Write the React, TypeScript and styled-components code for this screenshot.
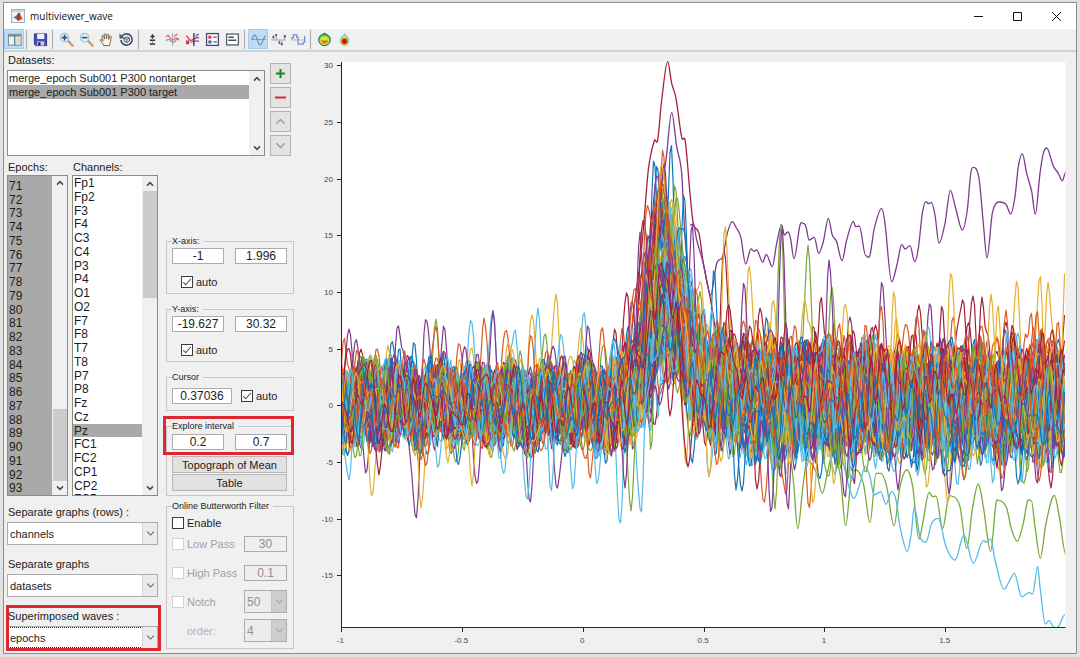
import React from "react";
import styled, { createGlobalStyle, css } from "styled-components";

const GlobalStyle = createGlobalStyle`
  *, *::before, *::after { box-sizing: border-box; }
  body {
    margin: 0;
    background: #e2e2e2;
    color: #1c1c1c;
    font: 11px/14px "Liberation Sans", Arial, sans-serif;
  }
  #root { display: flow-root; }
  button, input, select { font: inherit; color: inherit; margin: 0; }
`;

/* ---------- window chrome ---------- */

const Window = styled.div`
  display: flex;
  flex-direction: column;
  margin: 2px 3px 3px;
  min-height: calc(100vh - 5px);
  border: 1px solid #8c8c8c;
  background: #f0f0f0;
`;

const TitleBar = styled.header`
  display: flex;
  align-items: center;
  height: 26px;
  padding-left: 7px;
  background: #fff;
`;

const Title = styled.h1`
  flex: 1;
  margin: 0 0 0 5px;
  font: 400 10px/16px "Open Sans", "Noto Sans", sans-serif;
  color: #111;
`;

const WindowButton = styled.button`
  display: grid;
  place-items: center;
  width: 39px;
  height: 24px;
  padding: 0;
  border: 0;
  background: none;
`;

const Toolbar = styled.div`
  display: flex;
  align-items: center;
  height: 23px;
  padding-bottom: 1px;
  border-bottom: 2px solid #d2d2d2;
`;

const ToolButton = styled.button<{ $on?: boolean }>`
  display: grid;
  place-items: center;
  width: 20px;
  height: 20px;
  padding: 0;
  border: 1px solid ${(p) => (p.$on ? "#a5cdec" : "transparent")};
  background: ${(p) => (p.$on ? "#bfdcf2" : "none")};
`;

const Separator = styled.span`
  width: 1px;
  height: 19px;
  margin: 0 3px 0 2px;
  background: #a8a8a8;
`;

const Body = styled.main`
  flex: 1;
  display: flex;
  align-items: flex-start;
`;

/* ---------- side panel ---------- */

const Sidebar = styled.aside`
  flex: none;
  width: 296px;
  padding: 0 6px 4px 3px;
`;

const DatasetArea = styled.section`
  display: grid;
  grid-template-columns: 258px 21px;
  column-gap: 5px;
  align-items: end;
`;

const Stack = styled.div<{ $gap?: number }>`
  display: flex;
  flex-direction: column;
  gap: ${(p) => p.$gap ?? 0}px;
`;

const Caption = styled.span`
  padding-left: 1px;
  line-height: 16px;
`;

const SquareButton = styled.button`
  display: grid;
  place-items: center;
  width: 21px;
  height: 21px;
  padding: 0;
  border: 1px solid #b4b4b4;
  background: #e3e3e3;
`;

const Controls = styled.section`
  display: grid;
  grid-template-columns: 151px 128px;
  column-gap: 8px;
  align-items: end;
  margin-top: 3px;
`;

const ListRow = styled.div`
  display: grid;
  grid-template-columns: 61px 86px;
  gap: 0 4px;
`;

const ListFrame = styled.div<{ $height: number; $end?: boolean }>`
  display: grid;
  grid-template: 100% / 1fr 15px;
  align-items: ${(p) => (p.$end ? "end" : "start")};
  height: ${(p) => p.$height}px;
  overflow: hidden;
  border: 1px solid #8b8b8b;
  background: #fff;
`;

const List = styled.ul<{ $height: number; $large?: boolean }>`
  display: grid;
  grid-auto-rows: 1fr;
  height: ${(p) => p.$height}px;
  margin: 0;
  padding: 0;
  list-style: none;
  font-size: ${(p) => (p.$large ? 12 : 11)}px;
`;

const Item = styled.li<{ $selected?: boolean }>`
  min-height: 0;
  padding-left: 1px;
  white-space: nowrap;
  background: ${(p) => (p.$selected ? "#a9a9a9" : "none")};
`;

const ScrollTrack = styled.div`
  display: flex;
  flex-direction: column;
  align-self: stretch;
  align-items: center;
  background: #f0f0f0;
`;

const ScrollSpace = styled.div<{ $size?: number; $thumb?: boolean }>`
  width: 14px;
  flex: ${(p) => (p.$size ? `0 0 ${p.$size}px` : "1")};
  background: ${(p) => (p.$thumb ? "#cbcbcb" : "none")};
`;

const ArrowBox = styled.span`
  display: grid;
  place-items: center;
  height: 15px;
`;

const Fields = styled.div`
  display: grid;
  gap: 12px;
  margin-top: 9px;
`;

const Field = styled.label`
  position: relative;
  display: block;
`;

const FieldLabel = styled.span`
  display: block;
  width: 128px;
  height: 17px;
  overflow: hidden;
  padding-left: 1px;
  line-height: 14px;
`;

const SelectShell = styled.span<{ $dim?: boolean }>`
  display: grid;
  grid-template-columns: 1fr 15px;
  height: 23px;
  border: 1px solid #adadad;
  background: ${(p) => (p.$dim ? "#ececec" : "#fff")};
  color: ${(p) => (p.$dim ? "#929292" : "inherit")};
  font-size: ${(p) => (p.$dim ? 12 : 11)}px;
`;

const SelectBox = styled.select<{ $focus?: boolean }>`
  grid-area: 1 / 1 / 2 / 3;
  appearance: none;
  min-width: 0;
  margin-right: 14px;
  padding: 0 0 0 1px;
  border: 1px dotted ${(p) => (p.$focus ? "#222" : "transparent")};
  background: none;
  outline: 0;
  opacity: 1;
`;

const SelectArrow = styled.span<{ $dim?: boolean }>`
  grid-area: 1 / 2;
  display: grid;
  place-items: center;
  pointer-events: none;
  border-left: 1px solid ${(p) => (p.$dim ? "#c4c4c4" : "#d4d4d4")};
  background: ${(p) => (p.$dim ? "#cdcdcd" : "#ebebeb")};
`;

const highlightPlaces = {
  field: css`inset: -4px -3px -2px -1px;`,
  group: css`top: -4px; left: -3px; right: 0; height: 39px;`,
};

const Highlight = styled.span<{ $place: keyof typeof highlightPlaces }>`
  position: absolute;
  border: 3px solid #de2730;
  pointer-events: none;
  ${(p) => highlightPlaces[p.$place]}
`;

const Group = styled.fieldset<{ $top: number; $bottom: number }>`
  min-width: 0;
  margin: 0;
  padding: ${(p) => p.$top}px 6px ${(p) => p.$bottom}px 5px;
  border: 1px solid #c6c6c6;
`;

const Legend = styled.legend`
  padding: 0 4px 0 0;
  font-size: 9px;
  line-height: 12px;
`;

const Spread = styled.div<{ $packed?: boolean }>`
  display: flex;
  justify-content: ${(p) => (p.$packed ? "flex-start" : "space-between")};
  align-items: center;
`;

const TextBox = styled.input<{ $width: number }>`
  width: ${(p) => p.$width}px;
  height: 16px;
  padding: 0;
  border: 1px solid #ababab;
  background: #fff;
  font-size: 12px;
  text-align: center;
  &:disabled {
    background: #efefef;
    color: #8e8e8e;
  }
`;

const CheckLabel = styled.label<{ $dim?: boolean; $indent?: number }>`
  display: flex;
  align-items: center;
  gap: 3px;
  height: 12px;
  padding-left: ${(p) => p.$indent ?? 0}px;
  color: ${(p) => (p.$dim ? "#a2a2a2" : "inherit")};
  white-space: nowrap;
`;

const Check = styled.input`
  appearance: none;
  display: grid;
  place-items: center;
  width: 12px;
  height: 12px;
  border: 1px solid #3c3c3c;
  background: #fff;
  &:checked::after {
    content: "";
    width: 4px;
    height: 8px;
    margin-bottom: 2px;
    border: solid #444;
    border-width: 0 1px 1px 0;
    transform: rotate(42deg);
  }
  &:disabled { border-color: #d2d2d2; }
`;

const Relative = styled.div`
  position: relative;
`;

const ButtonStack = styled.div`
  display: grid;
  gap: 1px;
  margin-top: 6px;
`;

const PanelButton = styled.button`
  height: 17px;
  padding: 0;
  border: 1px solid #b6b6b6;
  background: #e2e2e2;
  line-height: 14px;
  white-space: nowrap;
`;

const FilterRow = styled.div`
  display: grid;
  grid-template-columns: 1fr 43px;
  align-items: center;
  height: 29px;
`;

const OrderLabel = styled.label`
  padding-left: 15px;
  color: #b0b0b0;
`;

const PlotArea = styled.section`
  flex: 1;
  min-width: 0;
`;

const PlotSvg = styled.svg`
  display: block;
  width: 100%;
  height: auto;
`;

const TickText = styled.text`
  font: 8px "Liberation Sans", Arial, sans-serif;
  fill: #484848;
`;

/* ---------- small drawings ---------- */

const Chevron = ({ up, color = "#4a4a4a", size = 8 }: { up?: boolean; color?: string; size?: number }) => (
  <svg width={size} height={size} viewBox="0 0 8 8" fill="none" stroke={color} strokeWidth={size > 8 ? 1 : 1.5}>
    <path d={up ? "M1 5.600 4 2.600 7 5.600" : "M1 2.400 4 5.400 7 2.400"} />
  </svg>
);

const Icon = ({ children }: { children: React.ReactNode }) => (
  <svg width="15" height="15" viewBox="0 0 16 16" fill="none">{children}</svg>
);

const MatlabIcon = () => (
  <svg width="14" height="14" viewBox="0 0 14 14">
    <rect x=".5" y=".5" width="13" height="13" fill="#eef3f8" stroke="#9fb0c2" />
    <path d="M1 1h12v2H1z" fill="#c6d6e6" />
    <path d="M2 8.300 5 7l2-3 1.200 1L6 10.400 4.400 9.600z" fill="#3d7cab" />
    <path d="M5 9.800C6.400 8.400 7 4 8.100 3.200c1.200.6 2 5 4 7.400-1.400-.6-2.400-.4-3.200.4L7.600 12 5 9.800z" fill="#c8421f" />
    <path d="M8.100 3.200c-.4 2-.4 5-.5 8.600L6 10.600C7 8 7.200 4.200 8.100 3.200z" fill="#8a2417" />
  </svg>
);

const icons = {
  panels: (
    <Icon>
      <rect x="1.500" y="2.500" width="13.500" height="11.500" fill="#f5f3ea" stroke="#6a8293" />
      <path d="M2 3h12.500v2H2z" fill="#7c95a8" />
      <path d="M8.200 3v11" stroke="#6a8293" strokeWidth="1.600" />
      <path d="M9.500 6h4.500v7H9.500z" fill="#dedbcd" />
    </Icon>
  ),
  save: (
    <Icon>
      <path d="M1.500 2h13v12.500H3L1.500 13z" fill="#4a4cc0" stroke="#2d2e8e" />
      <path d="M4.500 2h7.500v5.500H4.500z" fill="#f4f6ff" />
      <path d="M4.500 10h7.500v4.500H4.500z" fill="#c9cde2" />
      <path d="M5.500 11h2.500v3.500H5.500z" fill="#22246e" />
    </Icon>
  ),
  zoomIn: (
    <Icon>
      <path d="m9.500 9.500 5 5" stroke="#cf9c6d" strokeWidth="2.500" strokeLinecap="round" />
      <circle cx="6" cy="6" r="4.500" fill="#dff1fb" stroke="#a3c2d8" strokeWidth="1.200" />
      <path d="M3 6h6M6 3v6" stroke="#2a5287" strokeWidth="1.700" />
    </Icon>
  ),
  zoomOut: (
    <Icon>
      <path d="m9.500 9.500 5 5" stroke="#cf9c6d" strokeWidth="2.500" strokeLinecap="round" />
      <circle cx="6" cy="6" r="4.500" fill="#dff1fb" stroke="#a3c2d8" strokeWidth="1.200" />
      <path d="M3 6h6" stroke="#2a5287" strokeWidth="1.700" />
    </Icon>
  ),
  hand: (
    <Icon>
      <path
        d="M5 14.500C4.200 12 1.800 10 1.300 8.300c.9-.8 1.900.1 3 1.500L3 4.300c.6-1 1.500-.7 1.900.3l1 3-.4-5.200c.6-1 1.600-.8 1.900.2l.6 4.700.8-4.500c.7-.8 1.600-.4 1.700.5l-.3 4.600 1.500-3.200c.8-.6 1.600 0 1.400.9-.8 3-.7 5.700-2 8.900z"
        fill="#fff4e2" stroke="#6d5d50"
      />
    </Icon>
  ),
  rotate: (
    <Icon>
      <path d="M3 4.700A6 6 0 1 1 2 8.500" stroke="#46536e" strokeWidth="1.800" />
      <path d="M.5 1.500v5.500H6z" fill="#46536e" />
      <path d="m5.500 6.500 3-1.300 2.500 1.300v3.200l-2.700 1.500-2.800-1.500zM5.500 6.500l2.800 1.300L11 6.500M8.300 7.800v3.400" stroke="#46536e" />
    </Icon>
  ),
  adjust: (
    <Icon>
      <path d="M8 2.500v4.500M5.800 4.800h4.400M5.200 8.800h5.600M5.200 12.800h5.600" stroke="#2f2f2f" strokeWidth="1.500" />
      <path d="M8 9v3.500" stroke="#888" />
    </Icon>
  ),
  cursorWave: (
    <Icon>
      <path d="M1 5.500c2-3 3-2 4.500 1S8 9 10 7.500s3-1 5 0" stroke="#e27482" strokeWidth="1.500" />
      <path d="M1 9.500c2-2 3-2 5 0s4 2 5 0 2-2 4-1" stroke="#7f8bd6" strokeWidth="1.300" />
      <path d="M8 1v14" stroke="#a2a2ad" />
      <path d="m9.500 5 4-3" stroke="#e27482" strokeWidth="1.400" />
    </Icon>
  ),
  markWave: (
    <Icon>
      <path d="M1 5c2-2 3 4 5 4s5-4 9-3" stroke="#dc4358" strokeWidth="1.500" />
      <path d="M6 11c2 0 4-3 9-1" stroke="#5766c8" strokeWidth="1.300" />
      <path d="M9.500 1v14" stroke="#443a50" strokeWidth="1.500" />
      <path d="M1 9h3.500v4H1z" fill="#d8344c" />
      <path d="m11.500 4.500 3-2.500" stroke="#5766c8" strokeWidth="1.500" />
    </Icon>
  ),
  legend: (
    <Icon>
      <rect x="1.700" y="1.700" width="12.600" height="12.600" fill="#fff" stroke="#454b68" strokeWidth="1.400" />
      <path d="M3.500 4H7v3.200H3.500z" fill="#d64659" />
      <path d="M3.500 9H7v3.200H3.500z" fill="#4b61c4" />
      <path d="M9 5.500h3.500M9 10.600h3.500" stroke="#454b68" strokeWidth="1.300" />
    </Icon>
  ),
  title: (
    <Icon>
      <rect x="1.700" y="2.200" width="12.600" height="11.600" fill="#fff" stroke="#59616e" strokeWidth="1.400" />
      <path d="M3.500 5.500h6M3.500 8.800h8.500" stroke="#48505e" strokeWidth="1.600" />
    </Icon>
  ),
  line: (
    <Icon>
      <path d="M0 8h16" stroke="#8f989c" />
      <path d="M1 9C2.500 3 4.200 1.500 6 6l2 5.500c1.400 3.500 3 2 4-1L15 4" stroke="#6f8bca" strokeWidth="1.300" />
    </Icon>
  ),
  stem: (
    <Icon>
      <path d="M0 8.500h16" stroke="#a0a2b0" />
      <path d="M2.500 8V5M5.500 8V3M9 9v3M11.500 9v4M14.500 8V5" stroke="#8387a5" />
      <path d="M1.500 5h2M4.500 3h2M8 11.500h2M10.500 13h2M13.500 4.500H16" stroke="#47518f" strokeWidth="2" />
    </Icon>
  ),
  stairs: (
    <Icon>
      <path d="M0 8.500h16" stroke="#b0b0b8" />
      <path d="M1 8V6h1.500V3H6v2.500h1.500V13H13v-2h1.500V4" stroke="#7d89d4" strokeWidth="1.300" />
    </Icon>
  ),
  topoAll: (
    <Icon>
      <path d="m6.500 2.500 1.500-2 1.500 2z" fill="#333" />
      <circle cx="8" cy="8.300" r="6.300" fill="#3cc45e" stroke="#1f6d4a" />
      <ellipse cx="8" cy="9" rx="5.200" ry="4.600" fill="#d7ea3b" />
      <path d="M3.800 8.600C5.500 7 6.500 9 8 9s2.700-2 4.200-.4c.1 2.700-1.800 4.200-4.200 4.200S3.800 11 3.800 8.600z" fill="#fb9429" />
      <path d="M5.500 9.600h5L8 11.600z" fill="#ee4422" />
    </Icon>
  ),
  topoOne: (
    <Icon>
      <path d="M8 1c1 2 5 4.300 5 8.500a5 5.300 0 0 1-10 0C3 6 6.500 4 8 1z" fill="#58d0cc" />
      <path d="M8 3c1 1.600 4.200 3.800 4.200 6.800a4.200 4.200 0 0 1-8.400 0C3.800 7 7 5 8 3z" fill="#e9e43a" />
      <circle cx="8" cy="9.800" r="3.400" fill="#f26a24" />
      <circle cx="8" cy="10" r="2.500" fill="#c41410" />
    </Icon>
  ),
};

type ToolEntry = { icon: keyof typeof icons; label: string; on?: boolean };

const toolGroups: ToolEntry[][] = [
  [{ icon: "panels", label: "Toggle panel", on: true }],
  [{ icon: "save", label: "Save" }],
  [
    { icon: "zoomIn", label: "Zoom in" },
    { icon: "zoomOut", label: "Zoom out" },
    { icon: "hand", label: "Pan" },
    { icon: "rotate", label: "Rotate" },
  ],
  [
    { icon: "adjust", label: "Polarity" },
    { icon: "cursorWave", label: "Cursor" },
    { icon: "markWave", label: "Interval" },
    { icon: "legend", label: "Legend" },
    { icon: "title", label: "Title" },
  ],
  [
    { icon: "line", label: "Line", on: true },
    { icon: "stem", label: "Stem" },
    { icon: "stairs", label: "Stairs" },
  ],
  [
    { icon: "topoAll", label: "Topography" },
    { icon: "topoOne", label: "Headplot" },
  ],
];

/* ---------- plot ---------- */

const BLUE = 0, ORANGE = 1, YELLOW = 2, PURPLE = 3, GREEN = 4, SKY = 5, RED = 6;
const palette = ["#1274bb", "#d95a22", "#e8b02e", "#7f3a90", "#78aa38", "#55bce8", "#a4203a"];

const X0 = 341.5;
const X1 = 1065.5;
const toX = (t: number) => 583.2 + t * 241.7;
const toY = (v: number) => 405.3 - v * 11.33;

// Single deflections that leave the common band: x, y of the tip, colour.
const peaks: [number, number, number][] = [
  [344, 337, ORANGE], [349, 329, PURPLE], [356, 339, PURPLE], [388, 345, YELLOW], [392, 341, BLUE],
  [398, 325, PURPLE], [414, 342, BLUE], [426, 319, PURPLE], [436, 319, GREEN], [436, 326, ORANGE],
  [444, 325, PURPLE], [459, 343, ORANGE], [471, 320, SKY], [484, 318, ORANGE], [493, 310, SKY],
  [493, 311, PURPLE], [506, 330, ORANGE], [515, 329, SKY], [532, 315, YELLOW], [538, 308, SKY],
  [531, 335, ORANGE], [545, 333, GREEN], [556, 294, YELLOW], [561, 334, SKY], [581, 326, YELLOW],
  [584, 312, SKY], [588, 325, PURPLE], [602, 327, ORANGE], [615, 328, RED], [627, 292, RED],
  [640, 232, PURPLE], [654, 159, BLUE], [663, 148, ORANGE], [671, 143, BLUE], [657, 165, BLUE],
  [664, 164, PURPLE], [684, 193, BLUE], [675, 184, GREEN], [692, 223, PURPLE], [725, 225, YELLOW],
  [724, 249, RED], [714, 269, BLUE], [749, 265, YELLOW], [744, 282, PURPLE], [760, 308, RED],
  [773, 300, YELLOW], [781, 224, GREEN], [782, 227, PURPLE], [808, 245, GREEN], [805, 299, YELLOW],
  [821, 296, RED], [829, 260, PURPLE], [832, 287, GREEN], [845, 304, YELLOW], [850, 317, PURPLE],
  [882, 281, PURPLE], [894, 290, YELLOW], [919, 305, RED], [930, 303, PURPLE], [942, 305, RED],
  [951, 272, YELLOW], [963, 299, RED], [973, 296, RED], [982, 297, RED], [991, 294, YELLOW],
  [998, 304, YELLOW], [1006, 310, ORANGE], [1017, 280, YELLOW], [1031, 312, ORANGE], [1040, 275, YELLOW],
  [1048, 282, YELLOW], [1037, 310, ORANGE], [1066, 258, YELLOW],
  [349, 480, SKY], [366, 474, PURPLE], [372, 497, YELLOW], [379, 475, RED], [416, 519, PURPLE],
  [421, 508, YELLOW], [426, 466, ORANGE], [438, 468, SKY], [448, 463, YELLOW], [458, 465, BLUE],
  [472, 486, YELLOW], [477, 484, PURPLE], [504, 474, SKY], [527, 500, SKY], [530, 503, PURPLE],
  [551, 492, SKY], [557, 489, PURPLE], [573, 490, SKY], [590, 479, ORANGE], [597, 485, SKY],
  [620, 524, SKY], [625, 488, PURPLE], [631, 511, GREEN], [641, 514, SKY], [651, 452, GREEN],
  [670, 416, RED], [658, 418, SKY], [686, 467, YELLOW], [688, 467, RED], [692, 464, BLUE],
  [709, 477, YELLOW], [709, 476, SKY], [736, 490, BLUE], [742, 491, BLUE], [757, 489, RED],
  [764, 503, ORANGE], [771, 513, PURPLE], [775, 509, GREEN], [788, 511, PURPLE], [786, 495, ORANGE],
  [809, 509, ORANGE], [813, 504, YELLOW], [845, 498, PURPLE], [834, 485, YELLOW], [854, 485, RED],
  [898, 490, PURPLE], [927, 488, YELLOW], [949, 494, PURPLE], [948, 505, YELLOW], [993, 484, SKY],
  [1002, 492, PURPLE], [1018, 484, BLUE], [1037, 484, PURPLE], [1051, 488, RED],
];

function makeRandom(seed: number) {
  let s = seed;
  return () => {
    s = (s + 0x6d2b79f5) | 0;
    let t = Math.imul(s ^ (s >>> 15), 1 | s);
    t = (t + Math.imul(t ^ (t >>> 7), 61 | t)) ^ t;
    return ((t ^ (t >>> 14)) >>> 0) / 4294967296;
  };
}

const EPOCHS = 93;

// Offset of the late part of an epoch, in microvolts, by colour.
const lateShift = [-0.5, 0.8, 0.1, 0, -0.2, -0.3, 1.1];

function makeTraces() {
  const rand = makeRandom(41);
  const used = palette.map(() => 0);
  const spikes: [number, number][][] = Array.from({ length: EPOCHS }, () => []);
  for (const [x, y, c] of peaks) {
    const k = used[c]++ % 13;
    spikes[c + 7 * k].push([x, y]);
  }
  return Array.from({ length: EPOCHS }, (_, i) => {
    const waves = [80, 46, 31, 23, 18, 14, 11, 8].map((p, n) => ({
      w: (2 * Math.PI) / (p * (0.8 + rand() * 0.4)),
      a: [0.6, 0.7, 0.8, 0.85, 0.85, 0.75, 0.6, 0.35][n] * (0.4 + rand() * 1.1),
      ph: rand() * Math.PI * 2,
      m: rand() * 6,
      q: 12 + rand() * 25,
    }));
    const amp = 5 + rand() * 13.5;
    const mid = 666 + (rand() - 0.5) * 22;
    const rise = 18 + rand() * 9;
    const fall = 20 + rand() * 10;
    const late = (rand() - 0.5) * 2.4 + lateShift[i % 7];
    const pts: string[] = [];
    for (let x = X0; x <= X1; x += 1.5) {
      let n = 0;
      for (const k of waves) n += k.a * Math.sin(k.w * x + k.ph) * (1 + 0.7 * Math.sin(x / k.q + k.m));
      n += 0.7 * Math.sin(((x - 430) / 36) * Math.PI * 2) * (x < 600 ? 1 : 0.3);
      const limit = x < 600 ? 6.5 : 9;
      const gain = x < 600 ? 1.15 : Math.min(1.5, 1.15 + (x - 600) / 300);
      const edge = x < mid ? rise : fall;
      let v = limit * Math.tanh((n * gain) / limit) + 0.1;
      v += amp * Math.exp(-(((x - mid) / edge) ** 2));
      if (x > 690) v += (late + 1.6 * Math.exp(-(x - 690) / 80)) * Math.min(1, (x - 690) / 30);
      let y = toY(v);
      for (const [sx, sy] of spikes[i]) {
        const d = Math.abs(x - sx);
        if (d < 14) {
          const f = Math.exp(-((d / 4.4) ** 2));
          y = y * (1 - f) + sy * f;
        }
      }
      pts.push(`${x.toFixed(1)} ${y.toFixed(1)}`);
    }
    return { d: "M" + pts.join("L"), color: palette[i % 7] };
  });
}

// Smooth curve through points given on a grid of thirds of a unit.
function smooth(ox: number, oy: number, raw: number[]) {
  const p: [number, number][] = [];
  for (let i = 0; i < raw.length; i += 2) p.push([ox + raw[i] / 3, oy + raw[i + 1] / 3]);
  let d = `M${p[0][0].toFixed(1)} ${p[0][1].toFixed(1)}`;
  for (let i = 0; i < p.length - 1; i++) {
    const a = p[Math.max(0, i - 1)], b = p[i], c = p[i + 1], e = p[Math.min(p.length - 1, i + 2)];
    const slope = (l: number[], m: number[], r: number[]) =>
      (m[1] - l[1]) * (r[1] - m[1]) <= 0 ? 0 : (r[1] - l[1]) / (r[0] - l[0]);
    const h = (c[0] - b[0]) / 3;
    const y1 = b[1] + slope(a, b, c) * h;
    const y2 = c[1] - slope(b, c, e) * h;
    d += `C${(b[0] + h).toFixed(1)} ${y1.toFixed(1)} ${(c[0] - h).toFixed(1)} ${y2.toFixed(1)} ${c[0].toFixed(1)} ${c[1].toFixed(1)}`;
  }
  return d;
}

const soloTraces = [
  {
    color: palette[RED],
    d: smooth(310, 50, [950, 960, 975, 750, 990, 640, 1000, 540, 1015, 360, 1033, 272, 1043, 270, 1055, 150, 1073, 35, 1085, 100, 1098, 145, 1115, 262, 1126, 275, 1140, 430, 1150, 520, 1167, 550, 1180, 640, 1200, 740, 1215, 830, 1230, 940]),
  },
  {
    color: palette[PURPLE],
    d: smooth(310, 50, [1030, 560, 1050, 430, 1068, 330, 1085, 187, 1100, 290, 1115, 370, 1125, 560, 1140, 700]),
  },
  {
    color: palette[PURPLE],
    d: smooth(690, 50, [0, 525, 10, 522, 20, 570, 40, 640, 62, 735, 80, 640, 98, 620, 112, 550, 127, 515, 137, 530, 152, 560, 167, 642, 183, 597, 192, 604, 200, 600, 218, 637, 229, 613, 247, 650, 260, 580, 275, 525, 283, 555, 293, 546, 301, 562, 312, 626, 330, 525, 340, 520, 348, 530, 357, 570, 373, 562, 386, 610, 400, 575, 415, 505, 427, 555, 440, 575, 456, 632, 470, 570, 490, 514, 497, 530, 508, 528, 527, 617, 540, 615, 553, 535, 575, 475, 585, 520, 605, 695, 622, 640, 635, 583, 645, 597, 660, 587, 674, 635, 685, 595, 697, 490, 708, 455, 716, 461, 724, 457, 735, 495, 747, 580, 765, 520, 781, 421, 797, 475, 817, 540, 832, 480, 842, 370, 850, 352, 867, 385, 880, 520, 891, 624, 907, 490, 926, 456, 948, 463, 962, 492, 975, 440, 985, 350, 997, 311, 1010, 370, 1025, 425, 1036, 493, 1050, 370, 1060, 310, 1070, 294, 1090, 348, 1105, 370, 1117, 392, 1127, 367]),
  },
  {
    color: palette[GREEN],
    d: smooth(690, 340, [295, 330, 310, 420, 323, 566, 340, 430, 352, 360, 380, 400, 397, 460, 412, 400, 425, 350, 450, 400, 467, 557, 483, 420, 497, 390, 520, 430, 540, 548, 558, 400, 573, 400, 590, 440, 612, 557, 630, 440, 650, 390, 668, 440, 687, 598, 700, 540, 717, 457, 728, 470, 738, 468, 758, 565, 775, 475, 787, 469, 810, 500, 830, 625, 848, 500, 865, 432, 880, 500, 902, 634, 918, 490, 928, 482, 950, 505, 965, 570, 982, 604, 1000, 550, 1012, 485, 1024, 482, 1035, 560, 1051, 655, 1068, 550, 1093, 466, 1108, 530, 1127, 642]),
  },
  {
    color: palette[SKY],
    d: smooth(690, 340, [445, 300, 462, 380, 492, 475, 510, 430, 525, 380, 540, 410, 552, 465, 572, 455, 588, 493, 605, 455, 618, 480, 630, 560, 652, 634, 664, 580, 673, 500, 690, 590, 708, 606, 725, 550, 745, 535, 768, 620, 795, 660, 822, 585, 850, 670, 880, 602, 888, 606, 902, 597, 915, 660, 942, 748, 960, 720, 973, 700, 995, 770, 1018, 758, 1028, 762, 1043, 679, 1050, 740, 1066, 852, 1077, 842, 1092, 862, 1105, 860, 1125, 824]),
  },
];

const traces = makeTraces();
const yTicks = [30, 25, 20, 15, 10, 5, 0, -5, -10, -15];
const xTicks = [-1, -0.5, 0, 0.5, 1, 1.5];

const Plot = () => (
  <PlotSvg viewBox="300 52 776 600" role="img" aria-label="Superimposed epochs">
    <clipPath id="axes-clip">
      <rect x={X0} y="61" width={X1 - X0} height="567" />
    </clipPath>
    <rect x={X0} y="62" width={X1 - X0} height="565" fill="#fff" />
    <g clipPath="url(#axes-clip)" fill="none" strokeWidth="1.2" strokeLinejoin="round">
      {soloTraces.map((t, i) => <path key={`s${i}`} d={t.d} stroke={t.color} strokeWidth="1.3" />)}
      {traces.map((t, i) => <path key={i} d={t.d} stroke={t.color} />)}
    </g>
    <path d={`M341.5 62V627.500H${X1}`} fill="none" stroke="#262626" />
    {yTicks.map((v) => (
      <g key={v}>
        <path d={`M337 ${Math.round(toY(v)) + 0.5}h4`} stroke="#262626" />
        <TickText x="333" y={toY(v) + 3} textAnchor="end">{v}</TickText>
      </g>
    ))}
    {xTicks.map((t) => (
      <g key={t}>
        <path d={`M${Math.floor(toX(t)) + 0.5} 627v5`} stroke="#262626" />
        <TickText x={toX(t) - 1} y="643" textAnchor="middle">{t}</TickText>
      </g>
    ))}
  </PlotSvg>
);

/* ---------- reusable controls ---------- */

const Scrollbar = ({ before, thumb }: { before?: number; thumb?: number }) => (
  <ScrollTrack>
    <ArrowBox><Chevron up /></ArrowBox>
    {before ? <ScrollSpace $size={before} /> : null}
    {thumb ? <ScrollSpace $size={thumb} $thumb /> : null}
    <ScrollSpace />
    <ArrowBox><Chevron /></ArrowBox>
  </ScrollTrack>
);

type DropProps = { value: string; dim?: boolean; focus?: boolean; id?: string; label?: string };

const DropDown = ({ value, dim, focus, id, label }: DropProps) => (
  <SelectShell $dim={dim}>
    <SelectBox id={id} aria-label={label} defaultValue={value} disabled={dim} $focus={focus}>
      <option>{value}</option>
    </SelectBox>
    <SelectArrow $dim={dim}><Chevron color={dim ? "#a6a6a6" : "#6a6a6a"} size={9} /></SelectArrow>
  </SelectShell>
);

type TickProps = { text: string; checked?: boolean; dim?: boolean; indent?: number };

const TickBox = ({ text, checked, dim, indent }: TickProps) => (
  <CheckLabel $dim={dim} $indent={indent}>
    <Check type="checkbox" defaultChecked={checked} disabled={dim} />
    {text}
  </CheckLabel>
);

const AxisGroup = ({ name, from, to }: { name: string; from: string; to: string }) => (
  <Group $top={1} $bottom={5}>
    <Legend>{name}:</Legend>
    <Stack $gap={12}>
      <Spread>
        <TextBox $width={52} defaultValue={from} aria-label={`${name} minimum`} />
        <TextBox $width={52} defaultValue={to} aria-label={`${name} maximum`} />
      </Spread>
      <TickBox text="auto" checked indent={9} />
    </Stack>
  </Group>
);

const datasets = ["merge_epoch Sub001 P300 nontarget", "merge_epoch Sub001 P300 target"];
const epochs = Array.from({ length: 24 }, (_, i) => 70 + i);
const channels = "Fp1 Fp2 F3 F4 C3 C4 P3 P4 O1 O2 F7 F8 T7 T8 P7 P8 Fz Cz Pz FC1 FC2 CP1 CP2 FC5".split(" ");

export default function App() {
  return (
    <>
      <GlobalStyle />
      <Window>
        <TitleBar>
          <MatlabIcon />
          <Title>multiviewer_wave</Title>
          <WindowButton aria-label="Minimize">
            <svg width="11" height="11" fill="none" stroke="#111"><path d="M1 5.500h9" /></svg>
          </WindowButton>
          <WindowButton aria-label="Maximize">
            <svg width="11" height="11" fill="none" stroke="#111"><path d="M1.500 1.500h8v8h-8z" /></svg>
          </WindowButton>
          <WindowButton aria-label="Close">
            <svg width="11" height="11" fill="none" stroke="#111"><path d="m1 1 9 9M10 1l-9 9" /></svg>
          </WindowButton>
        </TitleBar>

        <Toolbar role="toolbar">
          {toolGroups.map((group, g) => (
            <React.Fragment key={g}>
              {g > 0 && <Separator />}
              {group.map((t) => (
                <ToolButton key={t.icon} $on={t.on} aria-label={t.label}>{icons[t.icon]}</ToolButton>
              ))}
            </React.Fragment>
          ))}
        </Toolbar>

        <Body>
          <Sidebar>
            <DatasetArea>
              <Stack $gap={2}>
                <Caption id="datasets-caption">Datasets:</Caption>
                <ListFrame $height={86}>
                  <List $height={28} role="listbox" aria-labelledby="datasets-caption">
                    {datasets.map((d, i) => (
                      <Item key={d} role="option" aria-selected={i === 1} $selected={i === 1}>{d}</Item>
                    ))}
                  </List>
                  <Scrollbar />
                </ListFrame>
              </Stack>
              <Stack $gap={3}>
                <SquareButton aria-label="Add dataset">
                  <svg width="11" height="11" stroke="#128a1c" strokeWidth="2"><path d="M1 5.500h9M5.500 1v9" /></svg>
                </SquareButton>
                <SquareButton aria-label="Remove dataset">
                  <svg width="11" height="11" stroke="#dc2338" strokeWidth="2"><path d="M0 5.500h11" /></svg>
                </SquareButton>
                <SquareButton aria-label="Move up"><Chevron up color="#9c9c90" size={11} /></SquareButton>
                <SquareButton aria-label="Move down"><Chevron color="#9c9c90" size={11} /></SquareButton>
              </Stack>
            </DatasetArea>

            <Controls>
              <div>
                <ListRow>
                  <Caption id="epochs-caption">Epochs:</Caption>
                  <Caption id="channels-caption">Channels:</Caption>
                  <ListFrame $height={321} $end>
                    <List $height={330} $large role="listbox" aria-labelledby="epochs-caption">
                      {epochs.map((n) => <Item key={n} role="option" aria-selected $selected>{n}</Item>)}
                    </List>
                    <Scrollbar before={218} thumb={72} />
                  </ListFrame>
                  <ListFrame $height={321}>
                    <List $height={330} $large role="listbox" aria-labelledby="channels-caption">
                      {channels.map((c) => (
                        <Item key={c} role="option" aria-selected={c === "Pz"} $selected={c === "Pz"}>{c}</Item>
                      ))}
                    </List>
                    <Scrollbar thumb={107} />
                  </ListFrame>
                </ListRow>
                <Fields>
                  <Field>
                    <FieldLabel>Separate graphs (rows) :</FieldLabel>
                    <DropDown value="channels" />
                  </Field>
                  <Field>
                    <FieldLabel>Separate graphs<br />(columns) :</FieldLabel>
                    <DropDown value="datasets" />
                  </Field>
                  <Field>
                    <FieldLabel>Superimposed waves :</FieldLabel>
                    <DropDown value="epochs" focus />
                    <Highlight $place="field" />
                  </Field>
                </Fields>
              </div>

              <Stack $gap={9}>
                <AxisGroup name="X-axis" from="-1" to="1.996" />
                <AxisGroup name="Y-axis" from="-19.627" to="30.32" />
                <Group $top={5} $bottom={6}>
                  <Legend>Cursor</Legend>
                  <Spread $packed>
                    <TextBox $width={60} defaultValue="0.37036" aria-label="Cursor position" />
                    <TickBox text="auto" checked indent={9} />
                  </Spread>
                </Group>
                <Stack $gap={4}>
                  <Relative>
                    <Group $top={2} $bottom={4}>
                      <Legend>Explore interval</Legend>
                      <Spread>
                        <TextBox $width={52} defaultValue="0.2" aria-label="Interval start" />
                        <TextBox $width={52} defaultValue="0.7" aria-label="Interval end" />
                      </Spread>
                      <ButtonStack>
                        <PanelButton>Topograph of Mean</PanelButton>
                        <PanelButton>Table</PanelButton>
                      </ButtonStack>
                    </Group>
                    <Highlight $place="group" />
                  </Relative>
                  <Group $top={5} $bottom={3}>
                    <Legend>Online Butterworth Filter</Legend>
                    <TickBox text="Enable" />
                    <FilterRow>
                      <TickBox text="Low Pass" dim />
                      <TextBox $width={43} defaultValue="30" disabled aria-label="Low pass frequency" />
                    </FilterRow>
                    <FilterRow>
                      <TickBox text="High Pass" dim />
                      <TextBox $width={43} defaultValue="0.1" disabled aria-label="High pass frequency" />
                    </FilterRow>
                    <FilterRow>
                      <TickBox text="Notch" dim />
                      <DropDown value="50" dim label="Notch frequency" />
                    </FilterRow>
                    <FilterRow>
                      <OrderLabel htmlFor="filter-order">order:</OrderLabel>
                      <DropDown value="4" dim id="filter-order" />
                    </FilterRow>
                  </Group>
                </Stack>
              </Stack>
            </Controls>
          </Sidebar>

          <PlotArea>
            <Plot />
          </PlotArea>
        </Body>
      </Window>
    </>
  );
}
